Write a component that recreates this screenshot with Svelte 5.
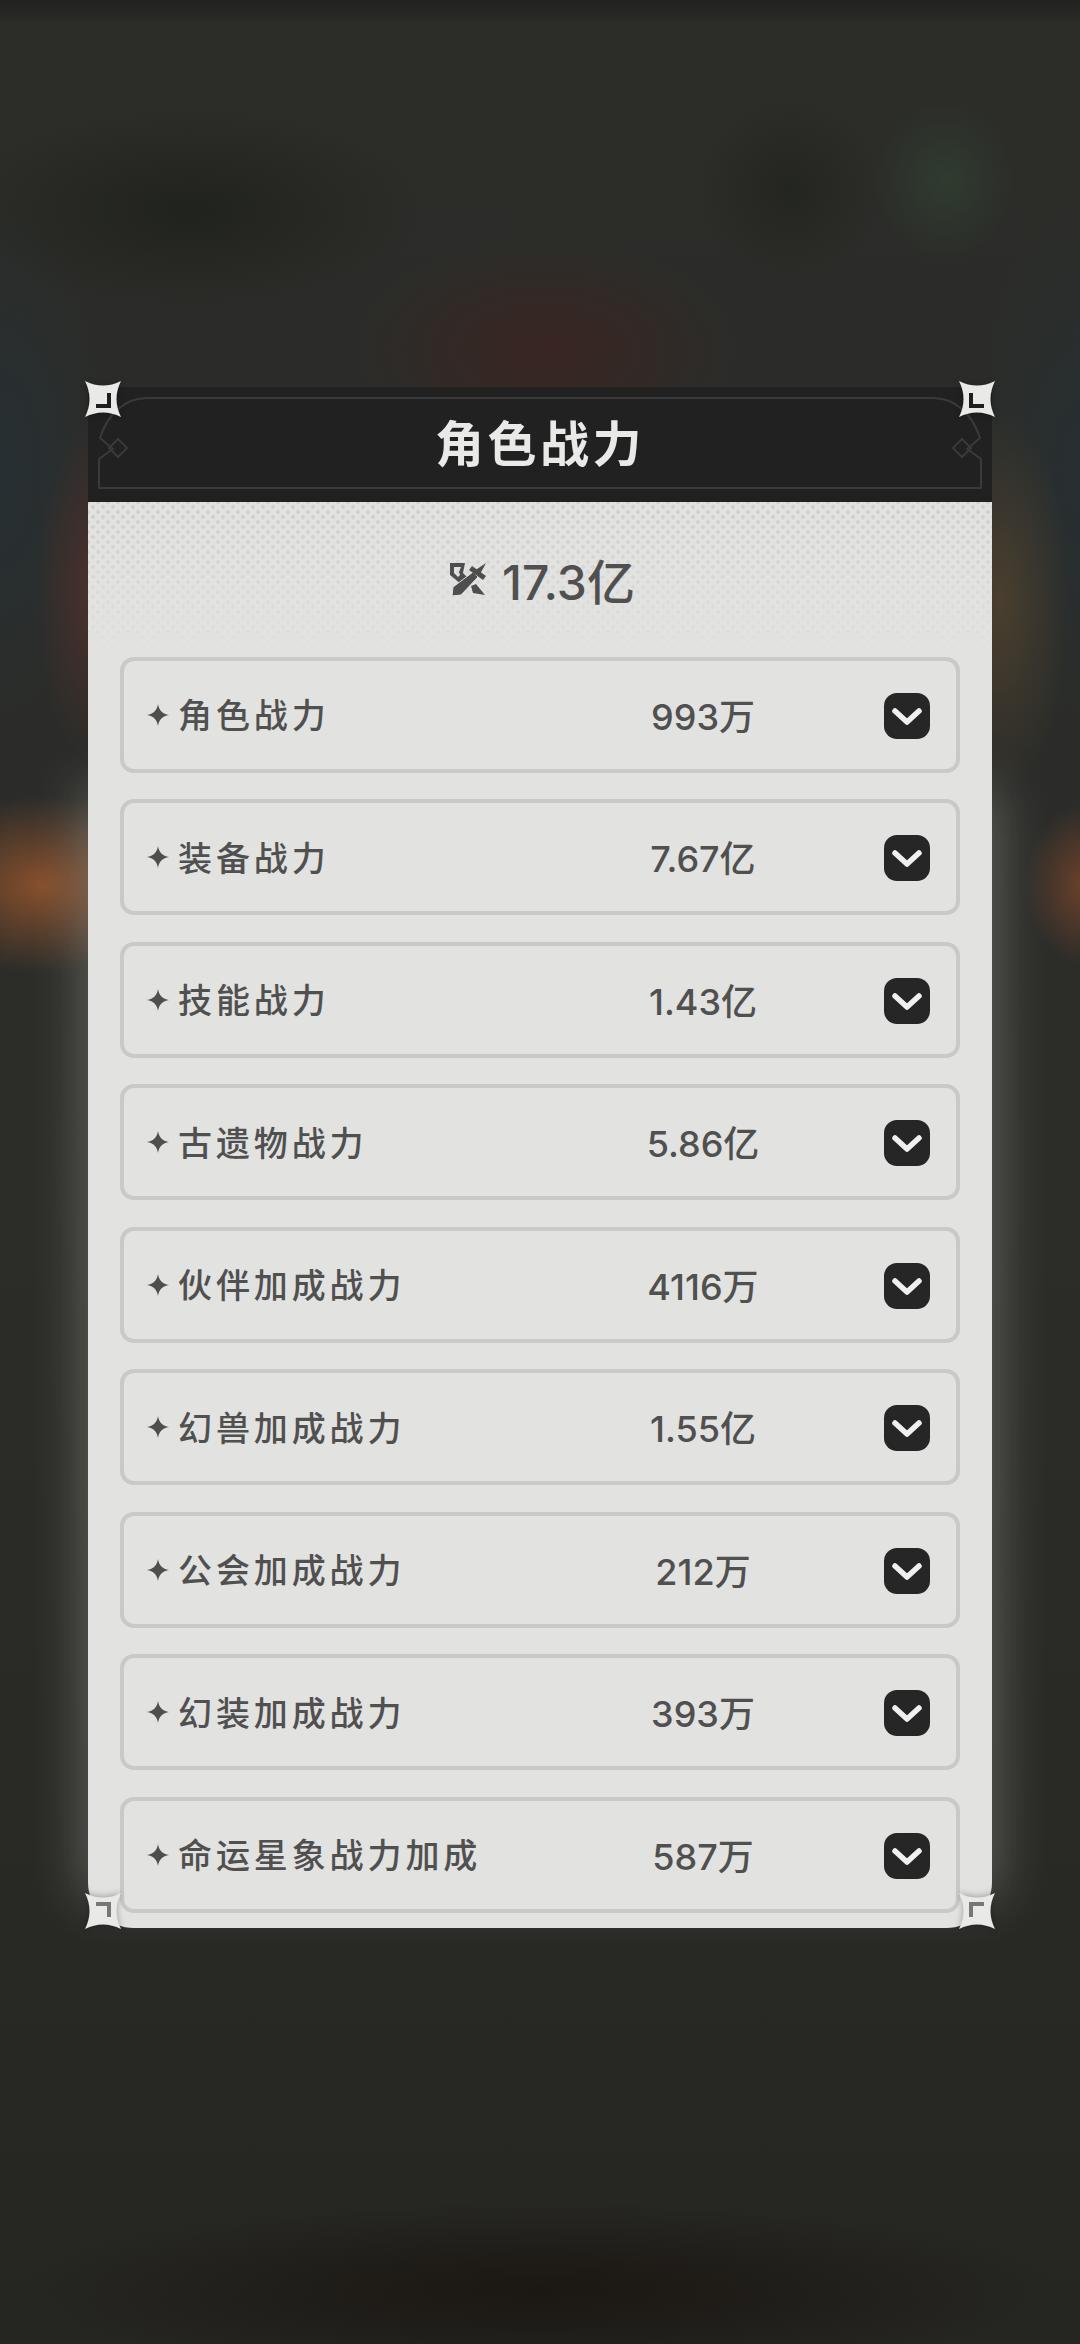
<script>
    const rows = [
        { name: '角色战力', value: '993万' },
        { name: '装备战力', value: '7.67亿' },
        { name: '技能战力', value: '1.43亿' },
        { name: '古遗物战力', value: '5.86亿' },
        { name: '伙伴加成战力', value: '4116万' },
        { name: '幻兽加成战力', value: '1.55亿' },
        { name: '公会加成战力', value: '212万' },
        { name: '幻装加成战力', value: '393万' },
        { name: '命运星象战力加成', value: '587万' }
    ];

    const corners = ['tl', 'tr', 'bl', 'br'];
</script>

<div class="page">
    <div class="panel">
        <div class="panel-inner">
            <header class="head">
                <svg class="frame" viewBox="0 0 904 115" aria-hidden="true">
                    <g fill="none" stroke="#3a3a3a" stroke-width="2">
                        <path d="M59 11H845C866 11 884 26 892 51L879 62L893 72V101H11V72L25 62L12 51C20 26 38 11 59 11Z" />
                        <path d="M30 52L39 61L30 70L21 61Z" />
                        <path d="M874 52L883 61L874 70L865 61Z" />
                    </g>
                </svg>
                <h1>角色战力</h1>
            </header>

            <div class="body">
                <div class="dots"></div>
                <div class="total">
                    <svg class="swords" viewBox="6 9 38 35" aria-hidden="true">
                        <g fill="#4e4e4e">
                            <path fill-rule="evenodd" d="M7 10H22L20 20L24 24L18 31L7 22ZM11 14V20L15 24L17 22L16 19L18 14Z" />
                            <path d="M28 33L33 31L42 42L30 40Z" />
                            <path d="M9 43L10 34L30 19L35 24L18 42Z" fill="#4e4e4e" stroke="#e2e2e0" stroke-width="1" />
                            <path d="M31 18L43 10L36 23Z" />
                            <path d="M29 13L43 23L40 27L26 17Z" />
                        </g>
                    </svg>
                    <span>17.3亿</span>
                </div>

                <div class="list">
                    {#each rows as row}
                        <div class="row">
                            <div class="label">
                                <svg class="star" viewBox="0 0 24 24" aria-hidden="true">
                                    <path d="M12 0C13 7 17 11 24 12C17 13 13 17 12 24C11 17 7 13 0 12C7 11 11 7 12 0Z" fill="#4e4e4e" />
                                </svg>
                                <span>{row.name}</span>
                            </div>
                            <div class="value">{row.value}</div>
                            <div class="toggle">
                                <svg viewBox="0 0 46 46" aria-hidden="true">
                                    <rect width="46" height="46" rx="13" fill="#262626" />
                                    <path d="M11 18L23 29L35 18" fill="none" stroke="#f0f0ee" stroke-width="5.5" stroke-linecap="round" stroke-linejoin="round" />
                                </svg>
                            </div>
                        </div>
                    {/each}
                </div>
            </div>
        </div>

        {#each corners as c}
            <svg class="corner {c}" viewBox="0 0 36 36" aria-hidden="true">
                <path d="M0 0C12 6 24 6 36 0C30 12 30 24 36 36C24 30 12 30 0 36C6 24 6 12 0 0Z" fill="#e9e9e7" />
                <path d="M22 12H26V27H11V23H22Z" fill={c === 'tl' || c === 'tr' ? '#1e1e1e' : '#777'} />
            </svg>
        {/each}
    </div>
</div>

<style>
    :global(body) {
        margin: 0;
        background: #2b2c29;
    }

    .page {
        box-sizing: border-box;
        width: 1080px;
        height: 2344px;
        padding: 387px 88px 0;
        overflow: hidden;
        background:
            radial-gradient(ellipse 190px 110px at 545px 350px, rgba(70, 32, 28, 0.55), transparent),
            radial-gradient(ellipse 70px 80px at 945px 180px, rgba(50, 72, 52, 0.55), transparent),
            radial-gradient(ellipse 90px 90px at 790px 190px, rgba(30, 32, 26, 0.6), transparent),
            radial-gradient(ellipse 230px 100px at 190px 210px, rgba(28, 30, 24, 0.7), transparent),
            radial-gradient(ellipse 120px 88px at 40px 885px, rgba(150, 85, 45, 0.85), transparent),
            radial-gradient(ellipse 60px 80px at 1085px 885px, rgba(125, 70, 45, 0.8), transparent),
            radial-gradient(ellipse 70px 190px at 1000px 600px, rgba(95, 75, 50, 0.6), transparent),
            radial-gradient(ellipse 60px 170px at 95px 590px, rgba(90, 50, 45, 0.7), transparent),
            radial-gradient(ellipse 110px 260px at 0 470px, rgba(36, 50, 58, 0.6), transparent),
            radial-gradient(ellipse 110px 260px at 1080px 470px, rgba(36, 50, 58, 0.5), transparent),
            radial-gradient(ellipse 520px 90px at 540px 2290px, rgba(22, 15, 11, 0.65), transparent),
            linear-gradient(#21221f, #2c2d29 24px, #2b2c29 500px, #2c2d29 1200px, #282925 1960px, #252521);
    }

    .panel {
        position: relative;
        width: 904px;
        height: 1541px;
    }

    .panel::before {
        content: '';
        position: absolute;
        inset: 400px -6px 30px;
        background: rgba(235, 235, 225, 0.27);
        filter: blur(26px);
    }

    .panel-inner {
        position: relative;
        height: 100%;
        overflow: hidden;
        border-radius: 6px 6px 46px 46px;
        background: #e2e2e0;
    }

    .head {
        position: relative;
        display: flex;
        align-items: center;
        justify-content: center;
        height: 115px;
        background: #212121;
    }

    .frame {
        position: absolute;
        inset: 0;
        width: 100%;
        height: 100%;
    }

    h1 {
        position: relative;
        margin: 0 0 8px;
        font: 700 49px "Noto Sans CJK SC", sans-serif;
        letter-spacing: 3.5px;
        color: #e9e9e7;
    }

    .body {
        position: relative;
        padding: 0 32px;
    }

    .dots {
        position: absolute;
        inset: 0 0 auto;
        height: 150px;
        background-image:
            radial-gradient(circle at center, #cfcfcd 1.6px, transparent 2.1px),
            radial-gradient(circle at center, #cfcfcd 1.6px, transparent 2.1px);
        background-size: 10px 10px;
        background-position: 0 0, 5px 5px;
        -webkit-mask-image: linear-gradient(#000, transparent);
        mask-image: linear-gradient(#000, transparent);
    }

    .total {
        position: relative;
        display: flex;
        align-items: center;
        justify-content: center;
        gap: 15px;
        box-sizing: border-box;
        height: 154.5px;
        padding-left: 4px;
        font: 500 48px Inter, "Noto Sans CJK SC", sans-serif;
        color: #505050;
    }

    .swords {
        width: 38px;
        height: 35px;
    }

    .list {
        position: relative;
        display: flex;
        flex-direction: column;
        gap: 26.5px;
    }

    .row {
        flex: none;
        display: grid;
        grid-template-columns: 1fr 200px 127px;
        align-items: center;
        box-sizing: border-box;
        height: 116px;
        padding: 0 26px 0 23px;
        border: 4px solid #c9c9c7;
        border-radius: 14px;
        font-family: Inter, "Noto Sans CJK SC", sans-serif;
        color: #505050;
    }

    .label {
        display: flex;
        align-items: center;
        gap: 9px;
        font: 500 34px "Noto Sans CJK SC", sans-serif;
        letter-spacing: 3.9px;
    }

    .label span {
        margin-top: -2px;
    }

    .star {
        width: 22px;
        height: 22px;
    }

    .value {
        margin-top: -2px;
        text-align: center;
        font-size: 36px;
        font-weight: 500;
        white-space: nowrap;
    }

    .toggle {
        display: flex;
        justify-content: flex-end;
        margin-top: 2px;
    }

    .toggle svg {
        display: block;
        width: 46px;
        height: 46px;
    }

    .corner {
        position: absolute;
        width: 36px;
        height: 36px;
        filter: drop-shadow(0 1px 3px rgba(0, 0, 0, 0.3));
    }

    .tl {
        top: -6px;
        left: -3px;
    }

    .tr {
        top: -6px;
        right: -3px;
        transform: scaleX(-1);
    }

    .bl {
        bottom: -1px;
        left: -3px;
        transform: scaleY(-1);
    }

    .br {
        bottom: -1px;
        right: -3px;
        transform: scale(-1, -1);
    }
</style>
